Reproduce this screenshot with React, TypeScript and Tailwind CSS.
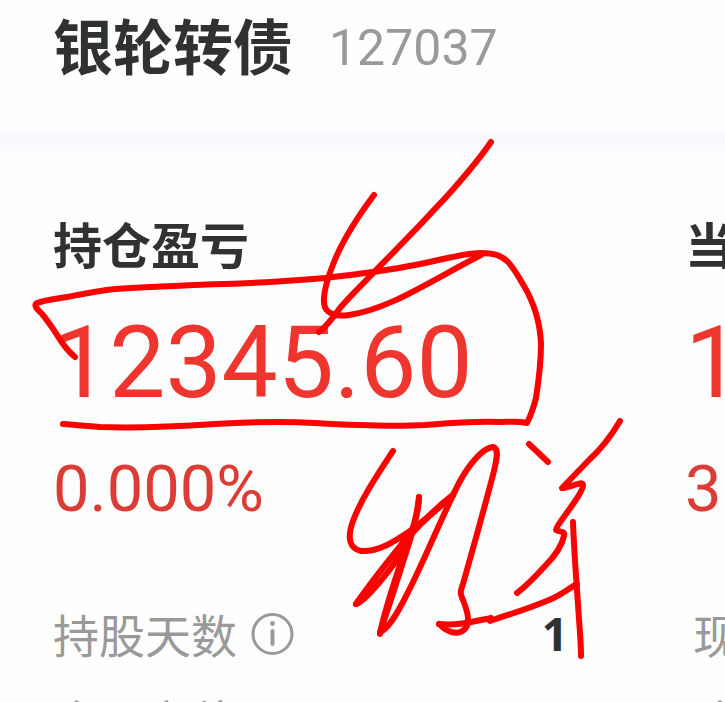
import type { ReactNode } from "react";

const cjk = "font-['Noto_Sans_CJK_SC',sans-serif]";
const num = "font-[Roboto,'Noto_Sans_CJK_SC',sans-serif]";

const strokes = [
  "M75 357C69 352 65 347 61 341C53 329 49 322 42 314C37 309 33 305 37 303C45 300 55 299 67 297C83 294 98 291 115 289C150 287 190 285 225 284C260 283 290 281 325 278C360 274 385 271 415 265C445 259 465 253 480 253C494 253 501 255 508 262C514 268 518 276 524 286C534 303 540 320 541 344C541 365 538 385 536 398C533 410 530 417 527 423C518 421 510 422 500 422C470 421 450 423 425 425C390 427 350 425 315 423C280 421 250 422 215 424C170 427 130 428 100 427C85 426 75 425 63 424",
  "M491 142C478 161 465 176 448 195C425 220 400 246 375 271C363 284 350 296 340 308C332 319 325 328 319 332",
  "M374 195C356 219 342 242 334 262C328 277 323 291 324 303C325 314 336 317 349 315C390 309 430 281 481 255",
  "M393 451C378 474 361 499 353 521C346 540 351 549 361 551C378 552 394 542 410 531C425 520 440 507 453 495",
  "M419 497C419 510 415 524 410 540C401 568 390 604 380 632C390 629 403 603 414 580C431 545 445 510 459 483C468 466 482 448 493 447C500 449 496 461 494 471C485 506 474 545 463 584C460 592 460 593 463 600C467 610 470 620 467 626C462 635 453 634 445 629C442 627 440 625 439 624",
  "M453 495C420 520 385 563 356 604C366 602 390 570 408 545",
  "M453 495L412 531C397 550 374 579 356 604",
  "M419 497C417 515 414 527 402 559C394 583 384 612 380 634",
  "M439 624C458 626 476 621 491 618L490 621C510 614 528 609 549 600C563 594 569 588 577 584",
  "M529 444L548 462",
  "M620 421C610 438 600 450 589 460L562 488C570 488 582 480 583 485C583 492 572 505 566 514C561 521 556 527 556 530C561 533 565 530 564 536C562 545 554 557 545 566C535 577 525 587 517 593",
  "M573 522C574 550 576 576 578 604C579 622 581 640 581 656",
];

function Markup() {
  return (
    <svg
      className="pointer-events-none absolute top-0 left-0"
      width="725"
      height="702"
      viewBox="0 0 725 702"
      fill="none"
      stroke="#fd0000"
      strokeWidth="6"
      strokeLinecap="round"
      strokeLinejoin="round"
      aria-hidden="true"
    >
      {strokes.map((d) => (
        <path key={d} d={d} />
      ))}
    </svg>
  );
}

function InfoIcon() {
  return (
    <svg className="size-11" viewBox="0 0 44 44" fill="none" stroke="#999" aria-hidden="true">
      <circle cx="21.5" cy="23" r="19.5" strokeWidth="3" />
      <circle cx="21.5" cy="12.5" r="2.4" fill="#999" stroke="none" />
      <path d="M21.5 20v13" strokeWidth="4" strokeLinecap="round" />
    </svg>
  );
}

function Metric({ label, value, rate }: { label: string; value: string; rate: string }) {
  return (
    <section className="shrink-0 whitespace-nowrap">
      <h2 className={`${cjk} text-[49px] leading-[60px] font-bold text-[#303231]`}>{label}</h2>
      <p className={`${num} mt-8 text-[100px] leading-[116px] text-[#ee352e]`}>{value}</p>
      <p className={`${num} mt-7 text-[65px] leading-[80px] text-[#db3c36]`}>{rate}</p>
    </section>
  );
}

function DetailRow({ label, value, children }: { label: string; value?: string; children?: ReactNode }) {
  return (
    <div className="flex h-[68px] items-center whitespace-nowrap">
      <dt className={`${cjk} flex items-center gap-3.5 text-[46px] leading-[68px] text-[#999]`}>
        {label}
        {children}
      </dt>
      <dd className="ml-auto font-['Open_Sans',sans-serif] text-[46px] leading-[68px] font-bold text-[#303231]">
        {value}
      </dd>
    </div>
  );
}

export default function App() {
  return (
    <main className="relative h-screen overflow-hidden bg-[#fefefe]">
      <header className="flex h-[131px] items-start gap-9 pt-0.5 pl-[53px] whitespace-nowrap">
        <h1 className={`${cjk} text-[60px] leading-[84px] font-bold text-[#303231]`}>银轮转债</h1>
        <span className={`${num} text-[50px] leading-[92px] text-[#999a9d]`}>127037</span>
      </header>
      <div className="h-5 bg-[#f8faff]" />
      <div className="h-1.5 bg-[#fdfbff]" />

      <div className="grid grid-cols-[1fr_40px] pt-14 pl-[53px]">
        <Metric label="持仓盈亏" value="12345.60" rate="0.000%" />
        <Metric label="当前" value="1" rate="3." />
      </div>

      <dl className="grid grid-cols-[1fr_32px] gap-x-[125px] gap-y-[18px] pt-[70px] pl-[53px]">
        <DetailRow label="持股天数" value="1">
          <InfoIcon />
        </DetailRow>
        <DetailRow label="现价" />
        <DetailRow label="今日市值" />
        <DetailRow label="成本" />
      </dl>

      <Markup />
    </main>
  );
}
